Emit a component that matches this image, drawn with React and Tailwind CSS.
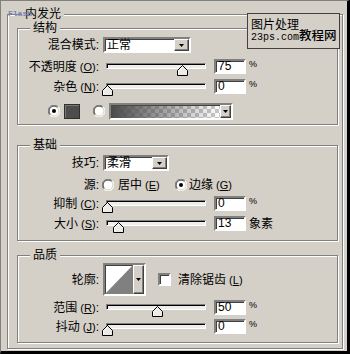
import React from 'react';

const sunken = 'border-2 border-white border-t-[#808080] border-l-[#808080] shadow-[inset_1px_1px_0_#404040]';
const raised = 'border border-t-white border-l-white border-r-[#404040] border-b-[#404040] shadow-[inset_-1px_-1px_0_#808080] bg-[#d4d0c8]';

function Arrow() {
  return (
    <svg width="5" height="3" viewBox="0 0 5 3">
      <polygon points="0,0 5,0 2.5,3" fill="#000" />
    </svg>
  );
}

function Radio({ checked }) {
  return (
    <svg width="12" height="12" viewBox="0 0 12 12" className="shrink-0">
      <circle cx="6" cy="6" r="5.5" fill="#fff" />
      <path d="M10.2 1.8 A5.9 5.9 0 0 0 1.8 10.2" stroke="#808080" fill="none" />
      <path d="M9.5 2.5 A4.9 4.9 0 0 0 2.5 9.5" stroke="#404040" fill="none" />
      <path d="M1.8 10.2 A5.9 5.9 0 0 0 10.2 1.8" stroke="#fff" fill="none" />
      <path d="M2.5 9.5 A4.9 4.9 0 0 0 9.5 2.5" stroke="#d4d0c8" fill="none" />
      {checked && <circle cx="6" cy="6" r="2" fill="#000" />}
    </svg>
  );
}

function Key({ k }) {
  return (
    <span className="text-[11px]">
      {' '}(<u>{k}</u>)
    </span>
  );
}

function Label({ text, k }) {
  return (
    <span className="w-[81px] shrink-0 text-right whitespace-nowrap">
      {text}
      {k && <Key k={k} />}:
    </span>
  );
}

function Slider({ pos }) {
  return (
    <div className="relative ml-[3px] h-full w-[108px] shrink-0">
      <div className="ml-[4px] mt-[4px] h-[6px] w-[100px] border border-t-[#808080] border-l-[#808080] border-b-white border-r-white bg-[#eeede9] shadow-[inset_1px_1px_0_#000]" />
      <svg width="11" height="11" viewBox="0 0 11 11" className="absolute top-[6px]" style={{ left: pos }}>
        <polygon points="5.5,0.5 10.5,5.5 10.5,10.5 0.5,10.5 0.5,5.5" fill="#ecebe6" stroke="#000" />
        <polyline points="1.5,9.5 1.5,5.9 5.5,1.9" stroke="#fff" fill="none" />
      </svg>
    </div>
  );
}

function Field({ value }) {
  return (
    <div className={`${sunken} ml-[4px] h-[15px] w-[32px] shrink-0 bg-white pl-[2px] text-[12px] leading-[11px]`}>
      {value}
    </div>
  );
}

function SliderRow({ label, k, pos, value, unit, className }) {
  return (
    <div className={`flex h-[15px] items-center ${className}`}>
      <Label text={label} k={k} />
      <Slider pos={pos} />
      <Field value={value} />
      {unit ? (
        <span className="ml-[3px]">{unit}</span>
      ) : (
        <span className="ml-[3px] self-start text-[9px] leading-[11px]">%</span>
      )}
    </div>
  );
}

function Group({ title, className, children }) {
  return (
    <div className={`border border-[#808080] shadow-[1px_1px_0_#fff,inset_1px_1px_0_#fff] ${className}`}>
      <div className="-mt-[8px] ml-[12px] h-[14px] w-fit bg-[#d4d0c8] px-[3px] leading-[14px]">{title}</div>
      {children}
    </div>
  );
}

export default function App() {
  return (
    <div className="relative h-[354px] w-[350px] overflow-hidden border-l border-t border-[#808080] border-r-[3px] border-b-[3px] border-r-black border-b-black bg-[#d4d0c8] font-['Liberation_Sans','Noto_Sans_CJK_SC',sans-serif] text-[12px] text-black">
      {/* 内发光 */}
      <div className="ml-[6px] mt-[13px] h-[335px] w-[336px] border border-[#808080] shadow-[1px_1px_0_#fff,inset_1px_1px_0_#fff]">
        <div className="-mt-[8px] ml-[14px] h-[14px] w-fit bg-[#d4d0c8] px-[3px] leading-[14px]">内发光</div>

        <Group title="结构" className="ml-[9px] mt-[7px] h-[97px] w-[321px]">
          <div className="mt-[2px] flex h-[16px] items-center">
            <Label text="混合模式" />
            <div className={`${sunken} ml-[4px] flex h-[16px] w-[88px] bg-white`}>
              <span className="flex-1 pl-[2px] leading-[12px]">正常</span>
              <div className={`${raised} flex w-[15px] items-center justify-center`}>
                <Arrow />
              </div>
            </div>
          </div>
          <SliderRow label="不透明度" k="O" pos={75} value="75" className="mt-[6px]" />
          <SliderRow label="杂色" k="N" pos={0} value="0" className="mt-[5px]" />
          <div className="mt-[9px] flex h-[16px] items-center">
            <div className="ml-[30px]">
              <Radio checked />
            </div>
            <div className="ml-[4px] h-[15px] w-[16px] border border-[#303030] bg-[#4d4d4d] shadow-[inset_1px_1px_0_#777]" />
            <div className="ml-[13px]">
              <Radio />
            </div>
            <div className={`${sunken} ml-[4px] flex h-[17px] w-[124px] bg-[conic-gradient(#c8c8c8_25%,#fff_0_50%,#c8c8c8_0_75%,#fff_0)] bg-[length:8px_8px]`}>
              <div className="flex-1 bg-linear-to-r from-[#4a4a4a] to-[#4a4a4a00]" />
              <div className={`${raised} flex w-[11px] items-center justify-center`}>
                <Arrow />
              </div>
            </div>
          </div>
        </Group>

        <Group title="基础" className="ml-[9px] mt-[20px] h-[96px] w-[321px]">
          <div className="mt-[3px] flex h-[16px] items-center">
            <Label text="技巧" />
            <div className={`${sunken} ml-[4px] flex h-[16px] w-[66px] bg-white`}>
              <span className="flex-1 pl-[2px] leading-[12px]">柔滑</span>
              <div className={`${raised} flex w-[15px] items-center justify-center`}>
                <Arrow />
              </div>
            </div>
          </div>
          <div className="mt-[7px] flex h-[14px] items-center">
            <Label text="源" />
            <div className="ml-[3px] flex w-[73px] items-center">
              <Radio />
              <span className="ml-[4px] whitespace-nowrap">
                居中<Key k="E" />
              </span>
            </div>
            <Radio checked />
            <span className="ml-[2px] whitespace-nowrap">
              边缘<Key k="G" />
            </span>
          </div>
          <SliderRow label="抑制" k="C" pos={0} value="0" className="mt-[4px]" />
          <SliderRow label="大小" k="S" pos={11} value="13" unit="象素" className="mt-[5px]" />
        </Group>

        <Group title="品质" className="ml-[9px] mt-[14px] h-[88px] w-[321px]">
          <div className="mt-[1px] flex h-[33px] items-center">
            <Label text="轮廓" />
            <div className={`${sunken} ml-[4px] flex h-[33px] w-[43px] bg-white`}>
              <svg width="28" height="29" viewBox="0 0 28 29" className="shrink-0">
                <polygon points="0,29 28,0 28,29" fill="#808080" />
              </svg>
              <div className={`${raised} flex flex-1 items-center justify-center`}>
                <Arrow />
              </div>
            </div>
            <div className={`${sunken} ml-[12px] h-[13px] w-[13px] bg-white`} />
            <span className="ml-[7px] whitespace-nowrap">
              清除锯齿<Key k="L" />
            </span>
          </div>
          <SliderRow label="范围" k="R" pos={50} value="50" className="mt-[4px]" />
          <SliderRow label="抖动" k="J" pos={0} value="0" className="mt-[4px]" />
        </Group>
      </div>

      {/* watermark overlays */}
      <div className="absolute left-[7px] top-[9px] font-['Liberation_Mono',monospace] text-[8px] font-bold leading-[8px] text-[#7a84b4]">Flash</div>
      <div className="absolute left-[246px] top-[12px] flex h-[36px] w-[93px] items-end border border-[#404040] bg-[#d4d0c8]">
        <div className="mb-[4px] ml-[3px] flex shrink-0 flex-col">
          <span className="whitespace-nowrap leading-[14px]">图片处理</span>
          <span className="whitespace-nowrap font-['Liberation_Mono',monospace] text-[10px] leading-[12px]">23ps.com</span>
        </div>
        <span className="mb-[4px] shrink-0 whitespace-nowrap text-[12.5px] font-medium leading-[16px]">教程网</span>
      </div>
    </div>
  );
}
